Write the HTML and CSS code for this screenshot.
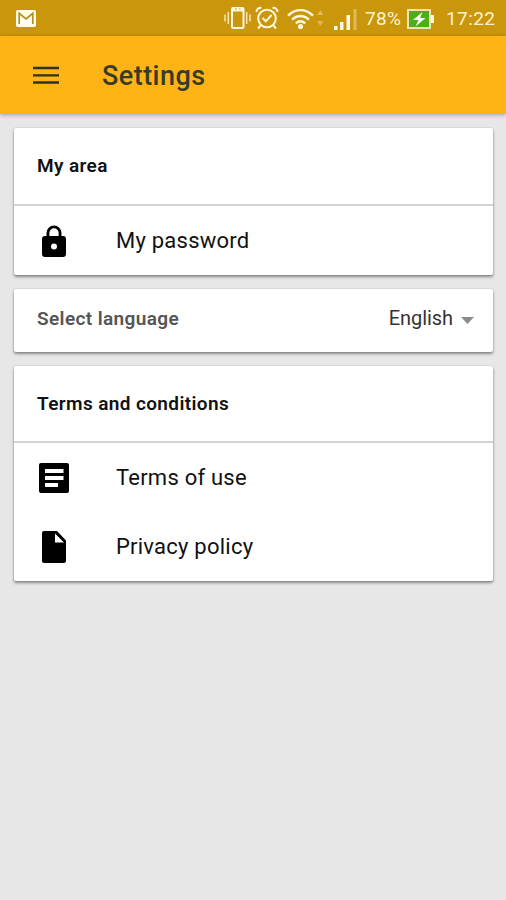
FILE: index.html
```html
<!DOCTYPE html>
<html lang="en">
<head>
<meta charset="utf-8">
<title>Settings</title>
<link rel="stylesheet" href="styles.css">
</head>
<body>
<div class="status">
  <svg class="mail" width="20" height="17" viewBox="0 0 20 17"><rect width="20" height="17" rx="1.8" fill="#fffdf0"/><path d="M3.200 14V3.400L10 9l6.800-5.600V14" fill="none" stroke="#b98c1c" stroke-width="1.700"/></svg>
  <svg class="vibrate" width="27" height="24" viewBox="0 0 27 24"><path d="M1 8.500v7M4.300 6v12M22.700 6v12M26 8.500v7" stroke="#f5e6b8" stroke-width="1.500"/><rect x="8" y="2" width="11.500" height="20" rx="1" fill="none" stroke="#fff8df" stroke-width="2"/><path d="M8 4h11.500" stroke="#fff8df" stroke-width="3"/><path d="M11 3h2M15 3h1.500" stroke="#c99a20" stroke-width="1"/></svg>
  <svg class="alarm" width="24" height="24" viewBox="0 0 24 24" fill="none" stroke="#fff8df" stroke-width="2"><circle cx="12" cy="12.500" r="8.800"/><path d="M1.500 6C1.500 3 3.500 1.500 6.500 1.800M22.500 6c0-3-2-4.500-5-4.200M5.500 19.500 3 22.500M18.500 19.500l2.500 3M7.500 12l3.300 3.300L16.500 9"/></svg>
  <svg class="wifi" width="37" height="24" viewBox="0 0 37 24"><g fill="none" stroke="#fff8df" stroke-width="2.400"><path d="M1 9.700C8.500 2.300 18.500 2.300 26 9.700"/><path d="M5 13.600c5.200-4.800 11.800-4.800 17 0"/><path d="M8.800 17.300c3-2.600 6.400-2.600 9.400 0"/></g><circle cx="13.500" cy="20.500" r="2.600" fill="#fff8df"/><path d="m30 9 3.300-5L36.600 9zM30 15h6.600l-3.300 5z" fill="#e1b84e"/></svg>
  <svg class="signal" width="23" height="22" viewBox="0 0 23 22"><path d="M0 18h3.500v4H0zM6 14h3.500v8H6zM12.500 7H16v15h-3.500z" fill="#fff8df"/><path d="M19.500 1h3v21h-3z" fill="#dfba5c"/></svg>
  <span class="percent">78%</span>
  <svg class="battery" width="28" height="20" viewBox="0 0 28 20"><rect x="1" y="1" width="22" height="18" fill="#4fae18" stroke="#eee3b5" stroke-width="2"/><path d="M24 6h3v8h-3z" fill="#fff8df"/><path d="M15.500 3 6 11h5.500L8.500 17.500 18.500 9H13z" fill="#fff"/></svg>
  <span class="time">17:22</span>
</div>
<header class="toolbar">
  <svg class="menu" width="26" height="18" viewBox="0 0 26 18"><path d="M0 2h26M0 9.300h26M0 16.500h26" stroke="#2d3225" stroke-width="2.300"/></svg>
  <h1>Settings</h1>
</header>
<main>
  <section class="card account">
    <h2>My area</h2>
    <div class="row">
      <svg width="36" height="36" viewBox="0 0 24 24"><path d="M18 8h-1V6A5 5 0 0 0 7 6v2H6a2 2 0 0 0-2 2v10a2 2 0 0 0 2 2h12a2 2 0 0 0 2-2V10a2 2 0 0 0-2-2zm-6 9a2 2 0 1 1 0-4 2 2 0 0 1 0 4zm3.100-9H8.900V6a3.100 3.100 0 0 1 6.200 0z"/></svg>
      <span>My password</span>
    </div>
  </section>
  <section class="card language">
    <span class="label">Select language</span>
    <span class="value">English</span>
    <svg width="13" height="7" viewBox="0 0 13 7"><path d="M0 0h13L6.500 7z" fill="#8b8b8b"/></svg>
  </section>
  <section class="card documents">
    <h2>Terms and conditions</h2>
    <div class="row">
      <svg width="36" height="36" viewBox="0 0 36 36"><path fill-rule="evenodd" d="M5 3h26a2 2 0 0 1 2 2v26a2 2 0 0 1-2 2H5a2 2 0 0 1-2-2V5a2 2 0 0 1 2-2zm4 6v4h18.500V9zm0 7v4h18.500v-4zm0 7v4h13v-4z"/></svg>
      <span>Terms of use</span>
    </div>
    <div class="row">
      <svg width="36" height="36" viewBox="0 0 36 36"><path fill-rule="evenodd" d="M8 2h13l9 9.500V32a2 2 0 0 1-2 2H8a2 2 0 0 1-2-2V4a2 2 0 0 1 2-2zm11 2.500v9h9z"/></svg>
      <span>Privacy policy</span>
    </div>
  </section>
</main>
</body>
</html>
```
FILE: styles.css
```css
* { box-sizing: border-box; }
body { margin: 0; min-height: 900px; background: #e7e7e7; font-family: Roboto, sans-serif; color: #111; }
svg { display: block; flex: none; }
span, h1, h2 { white-space: nowrap; }
.status { height: 36px; display: flex; align-items: center; padding-left: 16px; background: #ca960c; color: #fff3cc; font-size: 19px; }
.vibrate { margin-left: 188px; }
.alarm { margin-left: 4px; }
.wifi { margin-left: 8px; }
.signal { margin-left: 10px; margin-top: 2px; }
.percent { width: 36px; margin-left: 8px; margin-top: 1px; letter-spacing: .3px; }
.battery { margin-left: 6px; margin-top: 1px; }
.time { margin-left: 11px; margin-top: 1px; letter-spacing: .4px; }
.toolbar { height: 78px; display: flex; align-items: center; padding-left: 33px; background: #fdb414; box-shadow: 0 1px 4px rgba(0,0,0,.3); }
h1 { margin: 2px 0 0 43px; font-size: 27px; line-height: 32px; font-weight: 500; letter-spacing: .45px; color: #383b2b; }
main { display: flex; flex-direction: column; gap: 14px; padding: 14px 13px 0 14px; }
.card { background: #fff; border-radius: 2px; box-shadow: 0 2px 3px rgba(0,0,0,.4), 0 0 2px rgba(0,0,0,.18); }
h2 { height: 78px; margin: 0; padding: 0 23px 1px; display: flex; align-items: center; border-bottom: 2px solid #d3d3d3; font-size: 19px; font-weight: 600; letter-spacing: .38px; }
.row { height: 69px; display: flex; align-items: center; padding-left: 22px; font-size: 22px; letter-spacing: .23px; }
.row span { margin-left: 44px; }
.account .row svg { margin-top: 2px; }
.documents h2 { height: 77px; padding-bottom: 0; }
.language { height: 63px; display: flex; align-items: center; padding: 0 19px 4px 23px; }
.label { font-size: 19px; font-weight: 600; letter-spacing: .38px; color: #555; }
.value { margin-left: auto; margin-top: -1px; font-size: 20px; letter-spacing: -.05px; color: #333; }
.language svg { margin-left: 8px; margin-top: 4px; }
```
